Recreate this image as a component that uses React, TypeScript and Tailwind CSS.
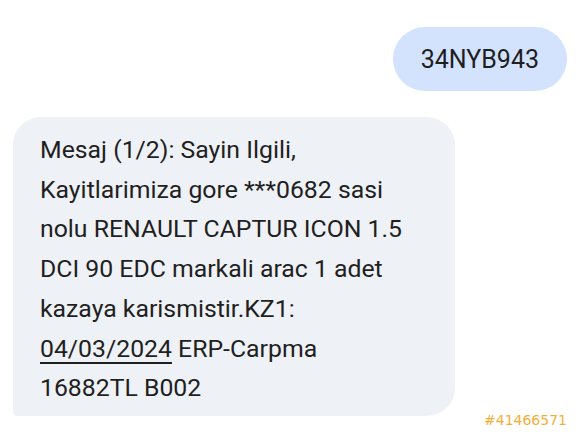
import React from "react";

const lines: React.ReactNode[] = [
  "Mesaj (1/2): Sayin Ilgili,",
  "Kayitlarimiza gore ***0682 sasi",
  "nolu RENAULT CAPTUR ICON 1.5",
  "DCI 90 EDC markali arac 1 adet",
  "kazaya karismistir.KZ1:",
  <>
    <span className="underline decoration-[1.5px] underline-offset-[5px]">04/03/2024</span> ERP-Carpma
  </>,
  "16882TL B002",
];

export default function App() {
  return (
    <div
      className="relative w-[580px] h-[435px] overflow-hidden bg-white flex flex-col text-[#1f1f1f]"
      style={{ fontFamily: "Roboto, 'Noto Sans', sans-serif" }}
    >
      {/* outgoing message */}
      <div className="self-end mr-[13px] mt-[27px] h-[64px] px-[28px] rounded-full bg-[#d3e3fd] flex items-center text-[25px] leading-none">
        34NYB943
      </div>

      {/* incoming message */}
      <div className="ml-[13px] mt-[26px] w-[442px] rounded-[28px] rounded-bl-[4px] bg-[#eef1f6] pl-[27px] pt-[13px] pb-[8px] text-[24.8px] leading-[39.7px]">
        {lines.map((l, i) => (
          <div key={i} className="whitespace-nowrap">
            {l}
          </div>
        ))}
      </div>

      <div
        className="absolute right-[13px] bottom-[8px] text-[14px] leading-none text-[#f2b03a]"
        style={{ fontFamily: "'DejaVu Sans', sans-serif" }}
      >
        #41466571
      </div>
    </div>
  );
}
